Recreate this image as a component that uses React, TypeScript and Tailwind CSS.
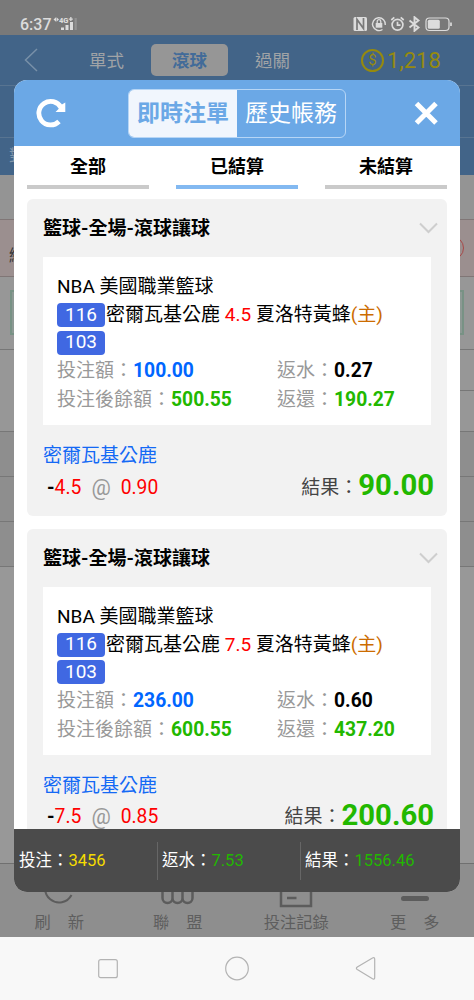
import { clsx } from 'clsx';

type Bet = {
  line: string;
  stake: string;
  rebate: string;
  balance: string;
  returned: string;
  odds: string;
  result: string;
};

const bets: Bet[] = [
  { line: '4.5', stake: '100.00', rebate: '0.27', balance: '500.55', returned: '190.27', odds: '0.90', result: '90.00' },
  { line: '7.5', stake: '236.00', rebate: '0.60', balance: '600.55', returned: '437.20', odds: '0.85', result: '200.60' },
];

const tabs = [
  { label: '全部', active: false },
  { label: '已結算', active: true },
  { label: '未結算', active: false },
];

const totals = [
  { label: '投注', value: '3456', color: 'text-[#f5dc00]' },
  { label: '返水', value: '7.53', color: 'text-[#22b800]' },
  { label: '結果', value: '1556.46', color: 'text-[#22b800]' },
];

function StatusBar() {
  return (
    <div className="flex h-[35px] items-start justify-between bg-[#797979] pr-[21px] pl-5 text-[#dcdcdc]">
      <div className="flex pt-[14px]">
        <span className="w-[33px] text-[16px] leading-[22px] font-medium">6:37</span>
        <svg className="mt-[1px]" width="26" height="17" viewBox="0 0 26 17" fill="currentColor">
          <text x="6" y="7.500" fontSize="7.500" fontWeight="900" fontFamily="Roboto">4G</text>
          <path d="M0.500 4.500l2.500-2.200v4.400zM6 4.500L3.500 2.300v4.400zM15.800 3.500h4v1.300h-4zM17.200 2h1.300v4h-1.300z" />
          <path d="M8 12.500h3V15H8zM12.500 10h3v5h-3zM17 7h3v8h-3z" />
          <path d="M21.500 3h2.300v12h-2.300z" opacity=".25" />
        </svg>
      </div>
      <svg className="mt-[16px]" width="100" height="16" viewBox="0 0 100 16" fill="none" stroke="currentColor">
        <rect x="0.500" y="1" width="13.500" height="14" rx="1.500" fill="currentColor" stroke="none" />
        <path d="M4 14V3.500L10.500 12.500V2" stroke="#797979" strokeWidth="1.700" />
        <path d="M29.500 13.500A6.400 6.400 0 1 1 32.300 9" strokeWidth="1.400" />
        <rect x="22.700" y="7" width="6.600" height="4.700" fill="currentColor" stroke="none" />
        <path d="M24.200 7V5.500a1.800 1.800 0 0 1 3.600 0V7" strokeWidth="1.300" />
        <circle cx="44.500" cy="8.800" r="5.400" strokeWidth="1.700" />
        <path d="M44.500 5.800v3.400h3M38.300 4l3-2.600M50.700 4l-3-2.600" strokeWidth="1.700" />
        <path d="M56.500 4.500l9 7-4 3.300V1.200l4 3.300-9 7" strokeWidth="1.900" />
        <rect x="73" y="2" width="23" height="12.500" rx="3.500" strokeWidth="1.200" />
        <rect x="74.800" y="3.800" width="12" height="9" rx="1.500" fill="currentColor" stroke="none" />
        <path d="M98 6.500v3.500" strokeWidth="1.700" />
      </svg>
    </div>
  );
}

// Dimmed game list that shows round the edges of the dialog
function Backdrop() {
  return (
    <>
      <StatusBar />
      <div className="flex h-[50px] items-center bg-[#426488] text-[17.5px] text-[#a0a3a6]">
        <svg className="ml-6" width="14" height="26" viewBox="0 0 14 26" fill="none" stroke="#7890a8" strokeWidth="1.500">
          <path d="M13 2L1.500 13 13 24" />
        </svg>
        <span className="ml-[51px] w-9 pt-[2px]">單式</span>
        <span className="ml-[26px] flex h-8 w-[77px] items-center justify-center rounded-[5px] bg-[#969696] pt-[2px] font-bold text-[#426b99]">滾球</span>
        <span className="ml-[27px] w-9 pt-[2px]">過關</span>
        <div className="ml-[70px] flex items-center text-[22px] text-[#968a0e]">
          <span className="mr-[3px] flex h-[23px] w-[23px] items-center justify-center rounded-full border-2 border-[#968a0e] text-[15px] leading-none">$</span>
          1,218
        </div>
      </div>
      <div className="h-[52px] border-t border-[#587491] bg-[#426488]" />
      <div className="h-[38px] overflow-hidden border-t border-[#587491] bg-[#426488] pt-[9px] pl-[9px] text-[16px] leading-[18px] text-[#8297ab]">對</div>
      <div className="h-11 bg-[#949494]" />
      <div className="flex h-[58px] items-center justify-between border-y border-[#807676] bg-[#9b8f8f] pl-[9px] text-[16px] text-[#333]">
        <span className="pt-4">綜</span>
        <span className="h-6 w-6 translate-x-[-10px] rounded-full border border-[#a84848]" />
      </div>
      <div className="flex h-[73px] justify-between border-b border-[#777] bg-[#979797] px-[10px] pt-[13px]">
        <div className="h-[45px] w-12 border-2 border-[#789285] bg-[#8d9994]" />
        <div className="h-[45px] w-12 border-2 border-[#789285] bg-[#8d9994]" />
      </div>
      <div className="flex h-[41px] justify-end bg-[#979797]">
        <div className="w-1/2 border-b border-[#777]" />
      </div>
      <div className="h-10 bg-[#979797]" />
      <div className="h-[45px] border-t border-[#777] bg-[#8e8e8e]" />
      <div className="h-[45px] border-t border-[#777] bg-[#8e8e8e]" />
      <div className="h-[45px] border-t border-[#777] bg-[#8e8e8e]" />
      <div className="h-[297px] border-t border-[#777] bg-[#989898]" />
      <BottomMenu />
      <SystemNav />
    </>
  );
}

function BottomMenu() {
  return (
    <div className="grid h-[74px] grid-cols-4 border-t border-[#707070] bg-[#8e8e8e] text-center text-[16.3px] leading-[22px] text-[#5e5e5e]">
      <div className="flex flex-col items-center">
        <svg width="32" height="48" viewBox="0 0 32 48" fill="none" stroke="#5c5c5c" strokeWidth="2">
          <path d="M28.500 31A14 14 0 1 1 28.500 18" />
        </svg>
        <span className="flex gap-[17px]"><span>刷</span><span>新</span></span>
      </div>
      <div className="flex flex-col items-center">
        <svg width="36" height="48" viewBox="0 0 36 48" fill="none" stroke="#5c5c5c" strokeWidth="2.500">
          <path d="M2.500 13v21a5 5 0 0 0 10 0V13M12.500 13v21a5 5 0 0 0 10 0V13M22.500 13v21a5 5 0 0 0 10 0V13" />
        </svg>
        <span className="flex gap-[17px]"><span>聯</span><span>盟</span></span>
      </div>
      <div className="flex flex-col items-center">
        <svg width="36" height="48" viewBox="0 0 36 48" fill="none" stroke="#5c5c5c" strokeWidth="2.500">
          <path d="M3 10h30v32H3zM9 34h9.500" />
        </svg>
        <span>投注記錄</span>
      </div>
      <div className="flex flex-col items-center">
        <svg width="36" height="48" viewBox="0 0 36 48" fill="none" stroke="#5c5c5c" strokeWidth="5" strokeLinecap="round">
          <path d="M6.500 13h23M6.500 24h23M6.500 34.500h23" />
        </svg>
        <span className="flex gap-[17px]"><span>更</span><span>多</span></span>
      </div>
    </div>
  );
}

function SystemNav() {
  return (
    <div className="flex h-[63px] justify-between bg-[#f8f8f8] px-[96px] pt-[18px]">
      <svg width="24" height="28" viewBox="0 0 24 28" fill="none" stroke="#b3b3b3" strokeWidth="1.200">
        <rect x="2.700" y="4.700" width="18.600" height="18" rx="2" />
      </svg>
      <svg width="26" height="28" viewBox="0 0 26 28" fill="none" stroke="#b3b3b3" strokeWidth="1.200">
        <circle cx="13" cy="13.500" r="11.300" />
      </svg>
      <svg width="24" height="28" viewBox="0 0 24 28" fill="none" stroke="#b3b3b3" strokeWidth="1.200">
        <path d="M3.300 12Q1.500 13.300 3.300 14.600L18.500 23.800Q20.700 24.700 20.700 22.500V4.300Q20.700 2 18.500 3z" />
      </svg>
    </div>
  );
}

function Tabs() {
  return (
    <div className="flex h-[53px] shrink-0 justify-between px-[13px]">
      {tabs.map((tab) => (
        <div
          key={tab.label}
          className={clsx(
            'h-[43px] w-[122px] border-b-4 pt-[9px] text-center text-[18px] leading-6 font-bold text-black',
            tab.active ? 'border-[#83b9f1]' : 'border-[#cacaca]'
          )}
        >
          {tab.label}
        </div>
      ))}
    </div>
  );
}

function Badge({ children }: { children: string }) {
  return <span className="flex h-6 w-[48px] items-center justify-center rounded-[4px] bg-[#4068e2] text-white">{children}</span>;
}

function BetCard({ bet }: { bet: Bet }) {
  return (
    <div className="mx-[13px] mb-[13px] h-[316.5px] shrink-0 rounded-md bg-[#f2f2f2] px-[16px]">
      <div className="flex h-[58px] items-center justify-between text-[19px] font-bold">
        <span className="pt-[3px]">籃球-全場-滾球讓球</span>
        <svg className="translate-x-[7px]" width="19" height="12" viewBox="0 0 19 12" fill="none" stroke="#cecece" strokeWidth="2">
          <path d="M1 1.500l8.500 8.500L18 1.500" />
        </svg>
      </div>
      <div className="h-[168px] bg-white pt-[15px] pl-[14px] text-[19px]">
        <div className="h-[29px] leading-[29px]">NBA 美國職業籃球</div>
        <div className="flex h-[28px] items-center whitespace-pre">
          <Badge>116</Badge>
          <span className="ml-px pt-px">密爾瓦基公鹿 </span>
          <span className="pt-px text-[#ff0000]">{bet.line}</span>
          <span className="pt-px"> 夏洛特黃蜂</span>
          <span className="pt-px text-[#cc6c00]">(主)</span>
        </div>
        <div className="flex h-[27px] items-center">
          <Badge>103</Badge>
        </div>
        <div className="grid grid-cols-[220px_1fr] leading-[29px] whitespace-nowrap text-[#999]">
          <div>投注額：<b className="text-[19.3px] text-[#0066ff]">{bet.stake}</b></div>
          <div>返水：<b className="text-[19.3px] text-black">{bet.rebate}</b></div>
          <div>投注後餘額：<b className="text-[19.3px] text-[#22b800]">{bet.balance}</b></div>
          <div>返還：<b className="text-[19.3px] text-[#22b800]">{bet.returned}</b></div>
        </div>
      </div>
      <div className="mt-4 h-7 text-[19px] leading-[29px] text-[#1469f5]">密爾瓦基公鹿</div>
      <div className="flex h-[34px] items-center justify-between">
        <div className="flex items-center pt-[3px] pl-1 text-[19.3px] leading-6">
          <b>-</b>
          <span className="text-[#ff0000]">{bet.line}</span>
          <span className="mr-[10px] ml-[10px] text-[21.5px] leading-6 text-[#999]">@</span>
          <span className="text-[#ff0000]">{bet.odds}</span>
        </div>
        <div className="mr-[-3px] flex items-center text-[19px] leading-6 text-[#444]">
          <span className="pt-[3px]">結果：</span>
          <b className="mb-[2px] text-[29.3px] leading-6 text-[#22b800]">{bet.result}</b>
        </div>
      </div>
    </div>
  );
}

function BetDialog() {
  return (
    <div className="absolute top-20 left-[14px] flex h-[812px] w-[446px] flex-col overflow-hidden rounded-[13px] bg-white text-black">
      <div className="flex h-[66px] shrink-0 items-center bg-[#6ba8e6] pl-[22px]">
        <svg width="31" height="31" viewBox="0 0 31 31" fill="none" stroke="white" strokeWidth="4.800">
          <path d="M23 23.500A11.800 11.800 0 1 1 25 9.500" />
          <path d="M29.300 4.500V14H19.500L22.500 11l2.500-4z" fill="white" stroke="none" />
        </svg>
        <div className="ml-[61px] flex h-[49px] w-[218px] overflow-hidden rounded-[6px] border border-[#b7d6f6] text-[23px]">
          <span className="flex w-[108px] items-center justify-center bg-[#f1f6fd] pt-[3px] font-bold text-[#6ba8e6]">即時注單</span>
          <span className="flex w-[108px] items-center justify-center pt-[3px] text-white">歷史帳務</span>
        </div>
        <svg className="ml-[68px]" width="24" height="24" viewBox="0 0 24 24" stroke="white" strokeWidth="5">
          <path d="M2.500 2.500l19.500 19.500M22 2.500L2.500 22" />
        </svg>
      </div>
      <Tabs />
      <div className="flex flex-1 flex-col overflow-hidden">
        {bets.map((bet) => (
          <BetCard key={bet.line} bet={bet} />
        ))}
      </div>
      <div className="flex h-[63px] shrink-0 items-center bg-[#4b4b4b] text-[16.5px] text-white">
        {totals.map((total, i) => (
          <div
            key={total.label}
            className={clsx(
              'flex h-[38px] w-[143px] items-center pt-[2px] whitespace-nowrap',
              i > 0 ? 'border-l border-[#666] pl-[4px]' : 'pl-[5px]'
            )}
          >
            {total.label}：<span className={total.color}>{total.value}</span>
          </div>
        ))}
      </div>
    </div>
  );
}

export default function App() {
  return (
    <div className="relative h-[1000px] w-[474px] overflow-hidden bg-[#949494] font-[Roboto,'Noto_Sans_CJK_TC',sans-serif]">
      <Backdrop />
      <BetDialog />
    </div>
  );
}
